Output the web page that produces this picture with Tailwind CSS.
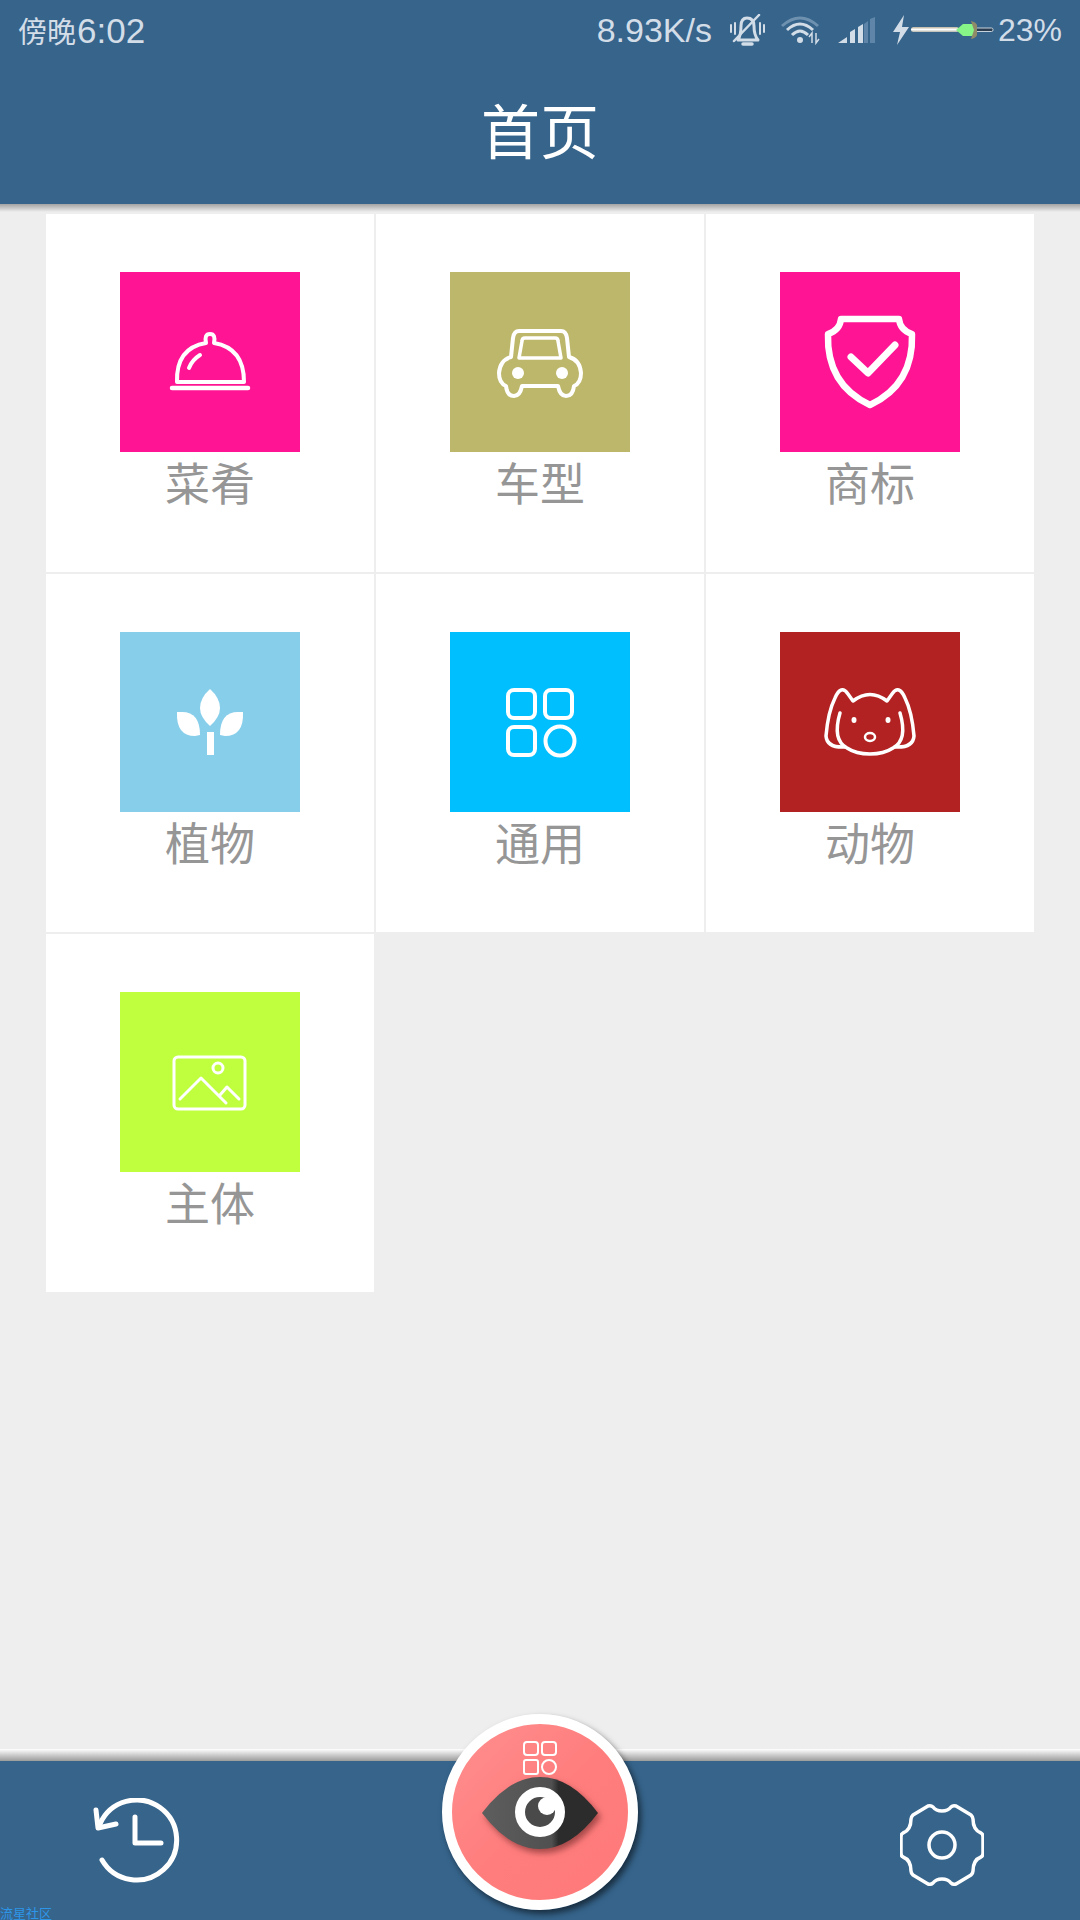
<!DOCTYPE html>
<html lang="zh-CN">
<head>
    <meta charset="UTF-8">
    <meta name="viewport" content="width=device-width, initial-scale=1.0">
    <title>首页</title>
    <script src="https://cdn.jsdelivr.net/npm/@tailwindcss/browser@4"></script>
</head>
<body class="bg-[#eeeeee] font-['Liberation_Sans','Noto_Sans_CJK_SC',sans-serif]">
<div class="w-[1080px] h-[1920px] flex flex-col overflow-hidden">

    <!-- Status bar + title -->
    <header class="bg-[#36648b] h-[204px] shrink-0">
        <div class="h-[60px] flex items-center justify-between pl-[18px] pr-[18px] text-[#d3dde8]">
            <div class="text-[35px] leading-none flex items-baseline"><span class="text-[29px] mr-[1px]">傍晚</span>6:02</div>
            <div class="flex items-center">
                <span class="text-[34px] leading-none">8.93K/s</span>
                <!-- muted bell -->
                <svg class="ml-[17px]" width="36" height="32" viewBox="0 0 36 32" fill="none" stroke="#d3dde8" stroke-width="3" stroke-linecap="round" stroke-linejoin="round">
                    <path d="M9 26 Q12 21 12 12 Q12 4 18 4 Q25 4 25 12 Q25 21 29 26 Z"/>
                    <path d="M14 30 H23" stroke-width="3.500"/>
                    <path d="M5 27 L30 1" stroke-width="2.500"/>
                    <path d="M6 9 V20 M2 11 V18 M31 9 V20 M35 11 V18" stroke-width="2"/>
                </svg>
                <!-- wifi -->
                <svg class="ml-[16px]" width="40" height="30" viewBox="0 0 40 30" fill="none" stroke-width="3">
                    <path d="M1 11 Q19 -5 37 11" stroke="#6f91b0"/>
                    <path d="M6 15 Q19 3 32 15 M11 20 Q19 12 27 20" stroke="#d3dde8"/>
                    <circle cx="19" cy="25" r="3" fill="#d3dde8"/>
                    <path d="M31 28 V18 L28 22 M35 18 V28 L38 24" stroke="#d3dde8" stroke-width="1.500"/>
                </svg>
                <!-- signal -->
                <svg class="ml-[17px]" width="37" height="26" viewBox="0 0 37 26">
                    <path d="M0 26 L9 20 V26 Z M12 26 V15 L17 12 V26 Z M20 26 V10 L25 7 V26 Z" fill="#d3dde8"/>
                    <path d="M26 26 V7 L30 4 V26 Z M32 26 V2 L37 0 V26 Z" fill="#5f86a8"/>
                </svg>
                <!-- charging bolt -->
                <svg class="ml-[18px]" width="17" height="30" viewBox="0 0 17 30">
                    <path d="M11 0 L0 17 H7 L4 30 L16 12 H9 Z" fill="#d3dde8"/>
                </svg>
                <!-- battery drawn as a little sword -->
                <svg width="84" height="20" viewBox="0 0 84 20">
                    <defs>
                        <linearGradient id="hilt" x1="0" x2="0" y1="0" y2="1">
                            <stop offset="0" stop-color="#b9b19c"/>
                            <stop offset="0.5" stop-color="#ffffff"/>
                            <stop offset="1" stop-color="#b5b5ad"/>
                        </linearGradient>
                    </defs>
                    <rect x="1" y="7" width="48" height="5" rx="2.500" fill="url(#hilt)"/>
                    <rect x="65" y="8" width="18" height="3.500" rx="1.500" fill="#2b3d50" stroke="#c8d2dc"/>
                    <path d="M46 10 L53 4 H66 V16 H53 Z" fill="#86f486"/>
                    <path d="M61 1 Q66 2 67 5 V15 Q66 18 61 19 L64 10 Z" fill="#8f8a68"/>
                </svg>
                <span class="text-[32px] leading-none ml-[4px]">23%</span>
            </div>
        </div>
        <h1 class="h-[144px] pt-[4px] flex items-center justify-center text-white text-[59px] leading-none font-normal">首页</h1>
    </header>
    <div class="h-[8px] shrink-0 bg-linear-to-b from-[#a3a3a3] to-[#eeeeee]"></div>

    <!-- Category grid -->
    <main class="flex-1 grid grid-cols-[328px_328px_328px] auto-rows-[358px] gap-[2px] content-start pl-[46px] pt-[2px] text-[45px] leading-none text-[#969696]">

        <div class="bg-white flex flex-col items-center pt-[58px]">
            <div class="w-[180px] h-[180px] bg-[#ff1493]">
                <svg width="180" height="180" viewBox="0 0 180 180" fill="none" stroke="white" stroke-width="4" stroke-linecap="round" stroke-linejoin="round">
                    <path d="M57 110 Q56 76 86 71 Q84 62 90 62 Q96 62 94 71 Q124 76 124 110 Z"/>
                    <path d="M69 96 Q72 88 80 83"/>
                    <path d="M52 116 H128" stroke-width="4.500"/>
                </svg>
            </div>
            <div class="mt-[11px]">菜肴</div>
        </div>

        <div class="bg-white flex flex-col items-center pt-[58px]">
            <div class="w-[180px] h-[180px] bg-[#bdb76b]">
                <svg width="180" height="180" viewBox="0 0 180 180" fill="none" stroke="white" stroke-width="4" stroke-linejoin="round">
                    <path d="M69 59 H111 Q116 59 117 66 L119 85 Q130 88 131 101 Q131 111 124 114 Q123 124 116 124 Q110 124 108 114 H72 Q70 124 64 124 Q57 124 56 114 Q49 111 49 101 Q50 88 61 85 L63 66 Q64 59 69 59 Z"/>
                    <path d="M75 66 H105 Q108 66 108 69 L111 86 H69 L72 69 Q72 66 75 66 Z" stroke-width="3.500"/>
                    <circle cx="68" cy="101" r="6" fill="white" stroke="none"/>
                    <circle cx="112" cy="101" r="6" fill="white" stroke="none"/>
                </svg>
            </div>
            <div class="mt-[11px]">车型</div>
        </div>

        <div class="bg-white flex flex-col items-center pt-[58px]">
            <div class="w-[180px] h-[180px] bg-[#ff1493]">
                <svg width="180" height="180" viewBox="0 0 180 180" fill="none" stroke="white" stroke-width="6.500" stroke-linecap="round" stroke-linejoin="round">
                    <path d="M61 47 H119 Q120 58 132 62 C133 92 122 118 90 133 C58 118 47 92 48 62 Q60 58 61 47 Z"/>
                    <path d="M71 85 L88 101 L115 73" stroke-width="7"/>
                </svg>
            </div>
            <div class="mt-[11px]">商标</div>
        </div>

        <div class="bg-white flex flex-col items-center pt-[58px]">
            <div class="w-[180px] h-[180px] bg-[#87ceeb]">
                <svg width="180" height="180" viewBox="0 0 180 180" fill="white">
                    <path d="M90 57 Q80 66 80 76 Q80 85 90 94 Q100 85 100 76 Q100 66 90 57 Z"/>
                    <path d="M57 80 Q56 104 75 104 L80 103 Q80 80 62 80 Z"/>
                    <path d="M123 80 Q124 104 105 104 L100 103 Q100 80 118 80 Z"/>
                    <rect x="87" y="100" width="7" height="23"/>
                </svg>
            </div>
            <div class="mt-[11px]">植物</div>
        </div>

        <div class="bg-white flex flex-col items-center pt-[58px]">
            <div class="w-[180px] h-[180px] bg-[#00bfff]">
                <svg width="180" height="180" viewBox="0 0 180 180" fill="none" stroke="white" stroke-width="4">
                    <rect x="58" y="58" width="27" height="28" rx="6"/>
                    <rect x="95" y="58" width="27" height="28" rx="6"/>
                    <rect x="58" y="95" width="27" height="28" rx="6"/>
                    <circle cx="110" cy="109" r="14.500"/>
                </svg>
            </div>
            <div class="mt-[11px]">通用</div>
        </div>

        <div class="bg-white flex flex-col items-center pt-[58px]">
            <div class="w-[180px] h-[180px] bg-[#b22222]">
                <svg width="180" height="180" viewBox="0 0 180 180" fill="none" stroke="white" stroke-width="3.500" stroke-linecap="round" stroke-linejoin="round">
                    <path d="M65 115 Q47 116 46 104 Q48 80 55 66 Q61 52 68 62 L73 69 Q90 56 107 69 L112 62 Q119 52 125 66 Q132 80 134 104 Q133 116 115 115"/>
                    <path d="M60 81 Q52 108 67 116 Q76 122 90 122 Q104 122 113 116 Q128 108 120 81"/>
                    <ellipse cx="74" cy="88" rx="2.500" ry="3" fill="white" stroke="none"/>
                    <ellipse cx="108" cy="88" rx="2.500" ry="3" fill="white" stroke="none"/>
                    <ellipse cx="90" cy="105" rx="5" ry="4" stroke-width="2.500"/>
                </svg>
            </div>
            <div class="mt-[11px]">动物</div>
        </div>

        <div class="bg-white flex flex-col items-center pt-[58px]">
            <div class="w-[180px] h-[180px] bg-[#c0ff3e]">
                <svg width="180" height="180" viewBox="0 0 180 180" fill="none" stroke="white" stroke-width="3" stroke-linecap="round" stroke-linejoin="round">
                    <rect x="54" y="65" width="71" height="52" rx="4"/>
                    <circle cx="98" cy="76" r="5"/>
                    <path d="M60 107 L81 86 L106 111"/>
                    <path d="M100 103 L107 95 L119 107"/>
                </svg>
            </div>
            <div class="mt-[11px]">主体</div>
        </div>
    </main>

    <!-- Bottom bar -->
    <footer class="relative shrink-0">
        <div class="h-[12px] bg-linear-to-b from-white to-[#9c9c9c]"></div>
        <div class="h-[159px] bg-[#36648b] flex items-start justify-between pl-[93px] pr-[96px] pt-[37px]">
            <svg width="90" height="90" viewBox="0 0 90 90" fill="none" stroke="white" stroke-width="5" stroke-linecap="round" stroke-linejoin="round">
                <path d="M7 26 A40 40 0 1 1 9 62"/>
                <path d="M3 12 L5 30 L23 26"/>
                <path d="M42 19 V45 H68"/>
            </svg>
            <svg class="mt-[5px]" width="84" height="84" viewBox="-42 -42 84 84" fill="none" stroke="white" stroke-width="3.500" stroke-linejoin="round">
                <path d="M0 -34 Q6 -34 9 -38 Q11 -40 14 -39 L29 -30 Q31 -28 31 -26 Q31 -15 39 -12 Q41 -11 41 -8 V8 Q41 11 39 12 Q31 15 31 26 Q31 28 29 30 L14 39 Q11 40 9 38 Q6 34 0 34 Q-6 34 -9 38 Q-11 40 -14 39 L-29 30 Q-31 28 -31 26 Q-31 15 -39 12 Q-41 11 -41 8 V-8 Q-41 -11 -39 -12 Q-31 -15 -31 -26 Q-31 -28 -29 -30 L-14 -39 Q-11 -40 -9 -38 Q-6 -34 0 -34 Z"/>
                <circle cx="0" cy="0" r="13"/>
            </svg>
        </div>

        <!-- Floating scan button -->
        <div class="absolute left-[442px] top-[-35px] w-[196px] h-[196px] rounded-full border-[10px] border-white bg-linear-to-br from-[#ff8f8f] via-[#ff7d7d] to-[#ff7a7a] shadow-[3px_4px_6px_rgba(0,0,0,0.55)] flex flex-col items-center">
            <svg class="mt-[17px]" width="36" height="34" viewBox="0 0 36 34" fill="none" stroke="white" stroke-width="2">
                <rect x="2" y="1" width="14" height="13" rx="3"/>
                <rect x="20" y="1" width="14" height="13" rx="3"/>
                <rect x="2" y="19" width="14" height="14" rx="2"/>
                <circle cx="27" cy="26" r="7"/>
            </svg>
            <svg class="mt-[1px] drop-shadow-[3px_4px_3px_rgba(90,30,30,0.55)]" width="118" height="74" viewBox="0 0 118 74">
                <defs>
                    <linearGradient id="eyeFill" x1="0" x2="1" y1="0" y2="0">
                        <stop offset="0" stop-color="#5e5e5e"/>
                        <stop offset="0.6" stop-color="#505050"/>
                        <stop offset="0.66" stop-color="#2c2c2c"/>
                        <stop offset="1" stop-color="#2c2c2c"/>
                    </linearGradient>
                </defs>
                <path d="M1 37 Q28 1 59 1 Q90 1 117 37 Q90 73 59 73 Q28 73 1 37 Z" fill="url(#eyeFill)"/>
                <circle cx="59" cy="36" r="20" fill="#4a4a4a" stroke="white" stroke-width="10"/>
                <circle cx="66" cy="30" r="9" fill="white"/>
            </svg>
        </div>

        <div class="absolute left-0 bottom-0 text-[13px] leading-none text-[#2e96e8]">流星社区</div>
    </footer>
</div>
</body>
</html>
